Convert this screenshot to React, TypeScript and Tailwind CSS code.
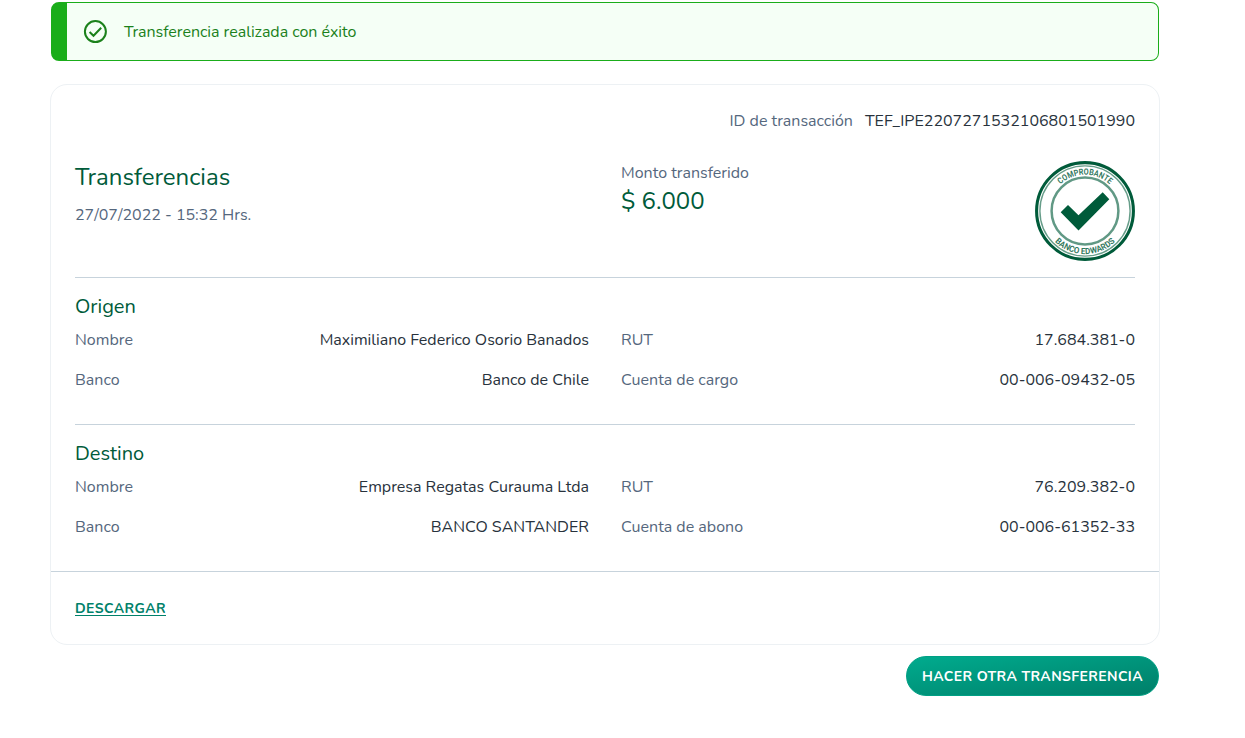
import React from "react";

function SuccessIcon() {
  return (
    <svg className="ml-4 h-6 w-6 shrink-0" viewBox="0 0 24 24" fill="none" stroke="#1b811b" aria-hidden="true">
      <circle cx="12.4" cy="11.6" r="10.5" strokeWidth="2" />
      <path d="M6.6 12l3.9 3.8 7.7-8" strokeWidth="2" />
    </svg>
  );
}

function Stamp() {
  return (
    <svg className="h-[100px] w-[100px] shrink-0" viewBox="0 0 100 100" fill="none" stroke="#005b3a">
      <defs>
        <path id="stamp-top" d="M13.7 50a36.3 36.3 0 0 1 72.6 0" />
        <path id="stamp-bottom" d="M6.9 50a43.1 43.1 0 0 0 86.2 0" />
      </defs>
      <circle cx="50" cy="50" r="48.4" strokeWidth="3.1" />
      <circle cx="50" cy="50" r="45.1" strokeWidth="1.4" strokeOpacity="0.6" />
      <circle cx="50" cy="50" r="33.4" strokeWidth="2.5" strokeOpacity="0.62" />
      <path d="M25.7 51.2l7.3-7.2L43.5 54.2l24.2-22.9 6.6 6.9L43.5 69.4z" fill="#005b3a" stroke="none" />
      <g className="font-['Roboto',sans-serif] text-[8.6px] font-bold" fill="#005b3a" fillOpacity="0.82" stroke="none" textAnchor="middle">
        <text>
          <textPath href="#stamp-top" startOffset="50%" textLength="54" lengthAdjust="spacingAndGlyphs">COMPROBANTE</textPath>
        </text>
        <text>
          <textPath href="#stamp-bottom" startOffset="50%" textLength="67" lengthAdjust="spacingAndGlyphs">BANCO EDWARDS</textPath>
        </text>
      </g>
    </svg>
  );
}

type FieldProps = { label: string; value: string };

function Field({ label, value }: FieldProps) {
  return (
    <div className="flex justify-between leading-6">
      <dt className="text-[#55677d]">{label}</dt>
      <dd className="text-[#28323c]">{value}</dd>
    </div>
  );
}

function Section({ title, fields }: { title: string; fields: FieldProps[] }) {
  return (
    <section className="mx-6 pt-4 pb-8">
      <h2 className="mb-2 text-xl leading-[26px] text-[#005b3a]">{title}</h2>
      <dl className="grid grid-cols-2 gap-x-8 gap-y-4">
        {fields.map((f) => (
          <Field key={f.label} {...f} />
        ))}
      </dl>
    </section>
  );
}

const origin: FieldProps[] = [
  { label: "Nombre", value: "Maximiliano Federico Osorio Banados" },
  { label: "RUT", value: "17.684.381-0" },
  { label: "Banco", value: "Banco de Chile" },
  { label: "Cuenta de cargo", value: "00-006-09432-05" },
];

const destination: FieldProps[] = [
  { label: "Nombre", value: "Empresa Regatas Curauma Ltda" },
  { label: "RUT", value: "76.209.382-0" },
  { label: "Banco", value: "BANCO SANTANDER" },
  { label: "Cuenta de abono", value: "00-006-61352-33" },
];

export default function App() {
  return (
    <main className="h-[738px] w-[1245px] overflow-hidden bg-white pt-0.5 pl-[50px] font-['Nunito','Lato',sans-serif] text-base">
      <div className="w-[1110px]">
        <div role="status" className="mx-px flex h-[59px] items-center rounded-lg border border-l-[16px] border-[#1aad1a] bg-[#f5fff6]">
          <SuccessIcon />
          <p className="ml-[17px] tracking-[-0.02px] text-[#1b811b]">Transferencia realizada con éxito</p>
        </div>

        <article className="mt-[23px] rounded-[17px] border border-[#edf1f4]">
          <div className="flex justify-end gap-3 px-6 pt-6 leading-6">
            <span className="text-[#55677d]">ID de transacción</span>
            <span className="text-[#28323c]">TEF_IPE2207271532106801501990</span>
          </div>
          <header className="mx-6 mt-7 grid h-[117px] grid-cols-2 gap-x-8 border-b border-[#c7d3dc]">
            <div>
              <h1 className="text-2xl leading-8 text-[#005b3a]">Transferencias</h1>
              <p className="mt-2.5 leading-6 text-[#55677d]">27/07/2022 - 15:32 Hrs.</p>
            </div>
            <div className="flex justify-between">
              <div>
                <p className="leading-6 text-[#55677d]">Monto transferido</p>
                <p className="text-2xl leading-8 text-[#005b3a]">$ 6.000</p>
              </div>
              <Stamp />
            </div>
          </header>

          <Section title="Origen" fields={origin} />
          <hr className="mx-6 border-[#c7d3dc]" />
          <Section title="Destino" fields={destination} />

          <footer className="flex h-[73px] items-center border-t border-[#c7d3dc] px-6">
            <a href="#" className="border-b border-[#00816a] pt-px text-sm leading-[13px] font-bold tracking-[0.42px] text-[#00816a]">DESCARGAR</a>
          </footer>
        </article>

        <div className="mt-[11px] flex justify-end pr-px">
          <button className="h-10 w-[253px] rounded-full border border-[#00a084] bg-linear-to-br from-[#00ab8e] to-[#007f69] pt-0.5 text-sm font-bold tracking-[0.4px] whitespace-nowrap text-white">
            HACER OTRA TRANSFERENCIA
          </button>
        </div>
      </div>
    </main>
  );
}
